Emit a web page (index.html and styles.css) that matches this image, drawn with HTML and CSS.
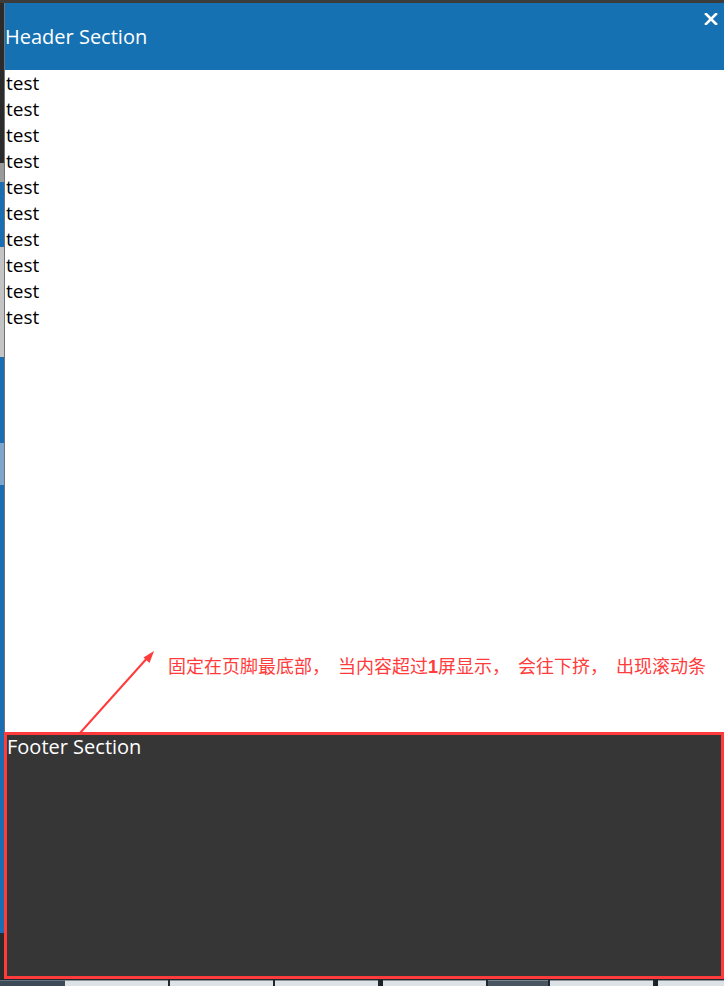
FILE: index.html
```html
<!DOCTYPE html>
<html lang="zh-CN">
<head>
<meta charset="utf-8">
<title>Header Footer</title>
<link rel="stylesheet" href="styles.css">
</head>
<body>
<div class="topbar"></div>
<div class="main">
  <div class="edge">
    <div class="seg s-dark1"></div>
    <div class="seg s-grey1"></div>
    <div class="seg s-blue1"></div>
    <div class="seg s-grey2"></div>
    <div class="seg s-blue2"></div>
    <div class="seg s-lblue"></div>
    <div class="seg s-blue3"></div>
  </div>
  <div class="window">
    <header class="header">
      <h1 class="title">Header Section</h1>
      <button class="close" aria-label="close">
        <svg width="14" height="12" viewBox="0 0 14 12"><path d="M2 1 L12 11 M12 1 L2 11" stroke="#fff" stroke-width="2.6" stroke-linecap="square" fill="none"/></svg>
      </button>
    </header>
    <div class="content">
      <div class="line">test</div>
      <div class="line">test</div>
      <div class="line">test</div>
      <div class="line">test</div>
      <div class="line">test</div>
      <div class="line">test</div>
      <div class="line">test</div>
      <div class="line">test</div>
      <div class="line">test</div>
      <div class="line">test</div>
    </div>
  </div>
</div>
<div class="footrow">
  <div class="edge2"><div class="seg2 s-b"></div><div class="seg2 s-d"></div></div>
  <footer class="footer">Footer Section</footer>
</div>
<div class="taskbar">
  <div class="tb tb-dark0"></div>
  <div class="tb tb-light"></div>
  <div class="tb tb-light"></div>
  <div class="tb tb-light"></div>
  <div class="tb tb-sep"></div>
  <div class="tb tb-light"></div>
  <div class="tb tb-dark1"></div>
  <div class="tb tb-light"></div>
  <div class="tb tb-sep"></div>
  <div class="tb tb-light tb-last"></div>
</div>

<div class="note">固定在页脚最底部<span class="cm">，</span>当内容超过<b class="num">1</b>屏显示<span class="cm">，</span>会往下挤<span class="cm">，</span>出现滚动条</div>
<svg class="arrow" width="724" height="986" viewBox="0 0 724 986">
  <line x1="80" y1="733" x2="149" y2="656" stroke="#ff3b3b" stroke-width="2"/>
  <polygon points="154,651 143.5,657.5 149.5,663" fill="#ff3b3b"/>
</svg>
</body>
</html>
```
FILE: styles.css
```css
* { box-sizing: border-box; }
html, body { margin: 0; padding: 0; }
body {
  width: 724px;
  height: 986px;
  overflow: hidden;
  background: #2b2b2b;
  font-family: "Open Sans", "Noto Sans", sans-serif;
  display: flex;
  flex-direction: column;
  position: relative;
}
.topbar { height: 3px; background: #3c3c3c; flex: none; }
.main { height: 729px; display: flex; flex: none; }
.edge {
  width: 5px;
  border-right: 1px solid #6f747a;
  display: flex;
  flex-direction: column;
  flex: none;
}
.seg { flex: none; }
.s-dark1 { height: 160px; background: #2b2b2b; }
.s-grey1 { height: 19px; background: #9a9a9a; }
.s-blue1 { height: 65px; background: #1a6db0; }
.s-grey2 { height: 110px; background: #c4c4c4; }
.s-blue2 { height: 86px; background: #1a6db0; }
.s-lblue { height: 42px; background: #7fa5cb; }
.s-blue3 { flex: 1; background: #1a6db0; }
.window { flex: 1; display: flex; flex-direction: column; background: #fff; }
.header {
  height: 67px;
  background: #1571b2;
  display: flex;
  justify-content: space-between;
  align-items: center;
  flex: none;
}
.title {
  margin: 0;
  font-weight: normal;
  font-size: 20px;
  line-height: 27px;
  color: #fff;
}
.close {
  align-self: flex-start;
  margin: 10px 6px 0 0;
  padding: 0;
  border: 0;
  background: none;
  width: 14px;
  height: 12px;
  display: block;
}
.close svg { display: block; }
.content { flex: 1; padding-left: 1px; }
.line { font-size: 19px; line-height: 26px; color: #000; }
.footrow { height: 247px; display: flex; flex: none; }
.edge2 { width: 4px; display: flex; flex-direction: column; flex: none; }
.seg2 { flex: none; }
.s-b { height: 201px; background: #1a6db0; }
.s-d { flex: 1; background: #2b2b2b; }
.footer {
  flex: 1;
  background: #363636;
  border: 3px solid #ff3b3b;
  color: #fff;
  font-size: 20px;
  line-height: 23px;
}
.taskbar { height: 7px; display: flex; flex: none; background: #20262c; padding-top: 1px; }
.tb { height: 6px; flex: none; }
.tb-dark0 { width: 65px; background: #3d4a57; border-top: 1px solid #66727e; }
.tb-light { width: 103px; background: #dde2e7; border-top: 1px solid #8b939b; margin-right: 2px; }
.tb-sep { width: 3px; background: #1b2128; }
.tb-dark1 { width: 60px; background: #4a5562; border-top: 1px solid #7a8590; margin-right: 2px; }
.tb-last { flex: 1; margin-right: 0; }
.note {
  position: absolute;
  left: 168px;
  top: 655px;
  font-family: "Noto Sans CJK SC", "Noto Sans", sans-serif;
  font-size: 18px;
  line-height: 20px;
  color: #ff3b3b;
  white-space: nowrap;
}
.cm { margin-right: 8px; }
.num { font-family: "Liberation Sans", sans-serif; font-weight: bold; }
.arrow { position: absolute; left: 0; top: 0; pointer-events: none; }
```
